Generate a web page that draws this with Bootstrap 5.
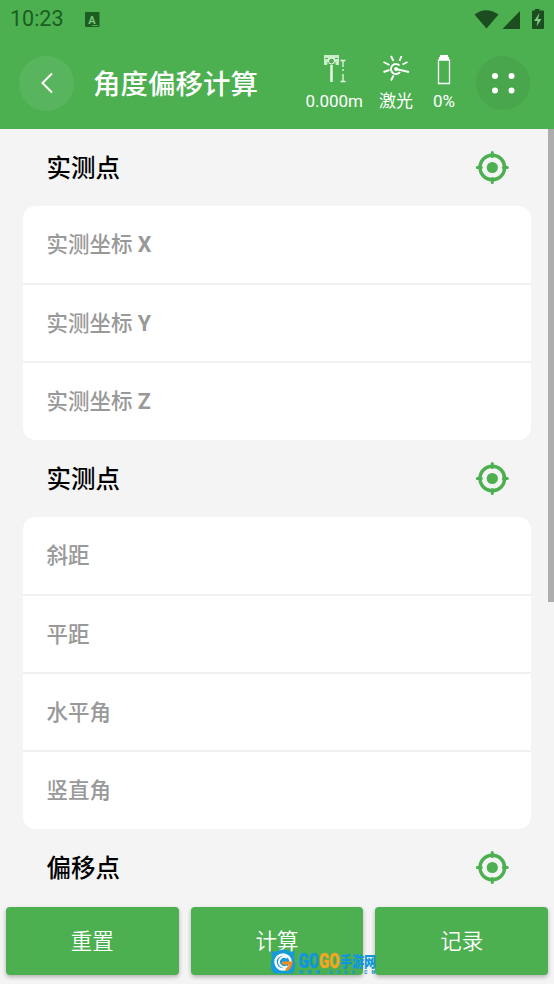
<!DOCTYPE html>
<html lang="zh-CN">
<head>
<meta charset="utf-8">
<meta name="viewport" content="width=device-width, initial-scale=1">
<title>角度偏移计算</title>
<link href="https://cdn.jsdelivr.net/npm/bootstrap@5.3.0/dist/css/bootstrap.min.css" rel="stylesheet">
<style>
:root{--green:#4caf50}
body{height:984px;overflow:hidden;background:#f4f4f4;font-family:Roboto,"Noto Sans CJK SC",sans-serif;color:#000}
svg{display:block;flex:none}
.app-head{background:var(--green);height:129px}
.status-row{height:37px;padding:2px 9px 0 10px;color:#1b5e20;font-size:21.5px}
.title-row{height:92px;padding:0 24px 0 19px}
.round-btn{width:55px;height:55px;background:#59b55d;border:0;padding:0}
.round-btn.menu-btn{background:#49a64d;width:54px;height:54px;margin-left:21px}
.page-title{font-size:27.5px;font-weight:500;line-height:1;margin:0 0 0 19px;padding-top:3px}
.gauge{font-size:17px;line-height:20px;gap:3px;padding-bottom:3px}
.sec-head{height:77px;padding:0 45px 0 46.5px}
.sec-head h2{font-size:24.5px;font-weight:500;margin:0;line-height:1;padding-top:3px}
.field-card{margin:0 23px;border-radius:12px;border:0;overflow:hidden}
.field-card .list-group-item{height:78px;padding:1px 24px 0 23.5px;border:0;border-bottom:2px solid #f0f0f0;color:#999;font-size:21.5px;font-weight:500;line-height:1;background:#fff}
.field-card .list-group-item:first-child{height:79px}
.field-card .list-group-item:last-child{border-bottom:0;height:77px}
.field-card b{font-weight:700}
.scroll-thumb{right:0;top:129px;width:6px;height:473px;background:#adadad}
.action-bar{height:77px;padding:0 6px;gap:12px}
.action-bar .btn{height:68px;background:var(--green);color:#fff;border:0;border-radius:4px;font-size:21.5px;box-shadow:0 2px 4px rgba(0,0,0,.28);flex:1 1 0;font-weight:350;padding-top:8px}
.site-mark{left:270px;top:947px}
</style>
</head>
<body class="d-flex flex-column position-relative">
<header class="app-head text-white flex-shrink-0">
  <div class="status-row d-flex align-items-center">
    <span>10:23</span>
    <svg class="ms-3" width="24" height="18" viewBox="0 0 24 18"><rect x="5" y="1" width="14.500" height="15" rx="1" fill="#1b5e20"/><text x="12" y="12.500" font-size="11" font-weight="700" text-anchor="middle" fill="#7cc47f">A</text><path d="M12 14.500h6" stroke="#4caf50"/></svg>
    <svg class="ms-auto" width="71" height="22" viewBox="474 8 71 22" fill="#1b4d20"><path d="M474.500 13.500Q486 5 498.500 13.500L486.500 27.500ZM502.500 28L520 10V28ZM535 9.500V8h4.500v1.500h3.500a1 1 0 0 1 1 1V27a1 1 0 0 1-1 1h-10a1 1 0 0 1-1-1V10.500a1 1 0 0 1 1-1Z"/><path fill="#7cc980" d="M539.500 12l-5.500 8h3.500l-1 5.500 5-7.500H538Z"/></svg>
  </div>
  <div class="title-row d-flex align-items-center">
    <button class="round-btn rounded-circle d-flex align-items-center justify-content-center"><svg width="14" height="22" viewBox="0 0 14 22" fill="none" stroke="#fff" stroke-width="2"><path d="M12 1.500 2.500 11 12 20.500"/></svg></button>
    <h1 class="page-title">角度偏移计算</h1>
    <div class="ms-auto d-flex text-center">
      <div class="gauge d-flex flex-column align-items-center"><svg width="26" height="36" viewBox="321 52 26 36" fill="none" stroke="#e6f8e6"><path fill="#c9eec9" stroke="none" d="M324 55h15v10h-3l-2-2h-5l-2 2h-3Z"/><circle cx="331.500" cy="61" r="3" fill="#4caf50" stroke="#fff"/><path stroke="#4caf50" d="M325 58.500h3M335 58.500h3M328 65v-3M335 65v-3"/><path stroke-width="2.500" d="M331.500 65v17"/><path stroke-width="1.300" d="M340.500 60.500h5M343 61v6M343 69v2M343 74v7M340.500 81.500h5"/></svg><span>0.000m</span></div>
      <div class="gauge d-flex flex-column align-items-center ms-3"><svg width="28" height="36" viewBox="382 52 28 36" fill="none" stroke="#fff" stroke-width="1.900"><path d="M399.500 65.500A5 5 0 1 0 400 72M396 69l13 3M391 56l2.500 5M401.500 56l-2 5M383.500 62l6 3M383.500 72l6-2M391 80.500l2.500-5M402.500 64.500l5-2.500"/><circle cx="396" cy="69" r="1"/></svg><span>激光</span></div>
      <div class="gauge d-flex flex-column align-items-center ms-3 ps-1"><svg width="14" height="36" viewBox="437.500 52 14 36" fill="none" stroke="#fff"><path fill="#fff" stroke="none" d="M440.500 55h8v2h1v3h-10v-3h1Z"/><path stroke-width="1.300" d="M439 60v23.500h11V60Z"/></svg><span>0%</span></div>
    </div>
    <button class="round-btn menu-btn rounded-circle d-flex align-items-center justify-content-center"><svg width="26" height="24" viewBox="0 0 26 24" fill="#fff"><circle cx="5" cy="5" r="3"/><circle cx="21.500" cy="5" r="3"/><circle cx="5" cy="19.500" r="3"/><circle cx="21.500" cy="19.500" r="3"/></svg></button>
  </div>
</header>
<svg width="0" height="0" class="position-absolute"><defs><g id="target"><circle cx="17.300" cy="16.500" r="12.300" fill="none" stroke="#4caf50" stroke-width="3.400"/><circle cx="17.300" cy="16.500" r="5.600" fill="#4caf50"/><path d="M17.300 1.500v4M17.300 27.500v4M2.300 16.500h4M28.300 16.500h4" stroke="#4caf50" stroke-width="3" stroke-linecap="round"/></g></defs></svg>
<main class="flex-grow-1 overflow-hidden">
  <div class="sec-head d-flex align-items-center justify-content-between"><h2>实测点</h2><svg width="34" height="34"><use href="#target"/></svg></div>
  <div class="list-group field-card">
    <div class="list-group-item d-flex align-items-center"><span>实测坐标 <b>X</b></span></div>
    <div class="list-group-item d-flex align-items-center"><span>实测坐标 <b>Y</b></span></div>
    <div class="list-group-item d-flex align-items-center"><span>实测坐标 <b>Z</b></span></div>
  </div>
  <div class="sec-head d-flex align-items-center justify-content-between"><h2>实测点</h2><svg width="34" height="34"><use href="#target"/></svg></div>
  <div class="list-group field-card">
    <div class="list-group-item d-flex align-items-center">斜距</div>
    <div class="list-group-item d-flex align-items-center">平距</div>
    <div class="list-group-item d-flex align-items-center">水平角</div>
    <div class="list-group-item d-flex align-items-center">竖直角</div>
  </div>
  <div class="sec-head d-flex align-items-center justify-content-between"><h2>偏移点</h2><svg width="34" height="34"><use href="#target"/></svg></div>
</main>
<footer class="action-bar d-flex flex-shrink-0">
  <button class="btn">重置</button><button class="btn">计算</button><button class="btn">记录</button>
</footer>
<div class="scroll-thumb position-absolute"></div>
<svg class="site-mark position-absolute" width="112" height="32" viewBox="270 947 112 32"><path fill="#169bd8" d="M271 950.500l4 1.500q9-5 16 0l4-1.500-1 7q3 12-2 16h-18q-5-5-2-16Z"/><circle cx="283" cy="962" r="7.500" fill="none" stroke="#fff" stroke-width="2.500"/><path d="M287 958a5 5 0 1 0 0 8" fill="none" stroke="#fff" stroke-width="2"/><path d="M282 963h9q-1 5-5 7" fill="none" stroke="#f58a1f" stroke-width="3"/><g font-weight="900" font-family="Roboto,'Noto Sans CJK SC',sans-serif"><text x="298.500" y="967.500" font-size="20" textLength="41" lengthAdjust="spacingAndGlyphs" stroke-width=".4"><tspan fill="#1296db" stroke="#1296db">GO</tspan><tspan fill="#f5a623" stroke="#f5a623">GO</tspan></text><text x="340" y="966.500" font-size="15" textLength="36" lengthAdjust="spacingAndGlyphs" fill="#1296db">手游网</text><text x="299" y="974" font-size="5" textLength="76" fill="#1296db">WWW.GOGO.CN</text></g></svg>
<script src="https://cdn.jsdelivr.net/npm/bootstrap@5.3.0/dist/js/bootstrap.bundle.min.js"></script>
</body>
</html>
